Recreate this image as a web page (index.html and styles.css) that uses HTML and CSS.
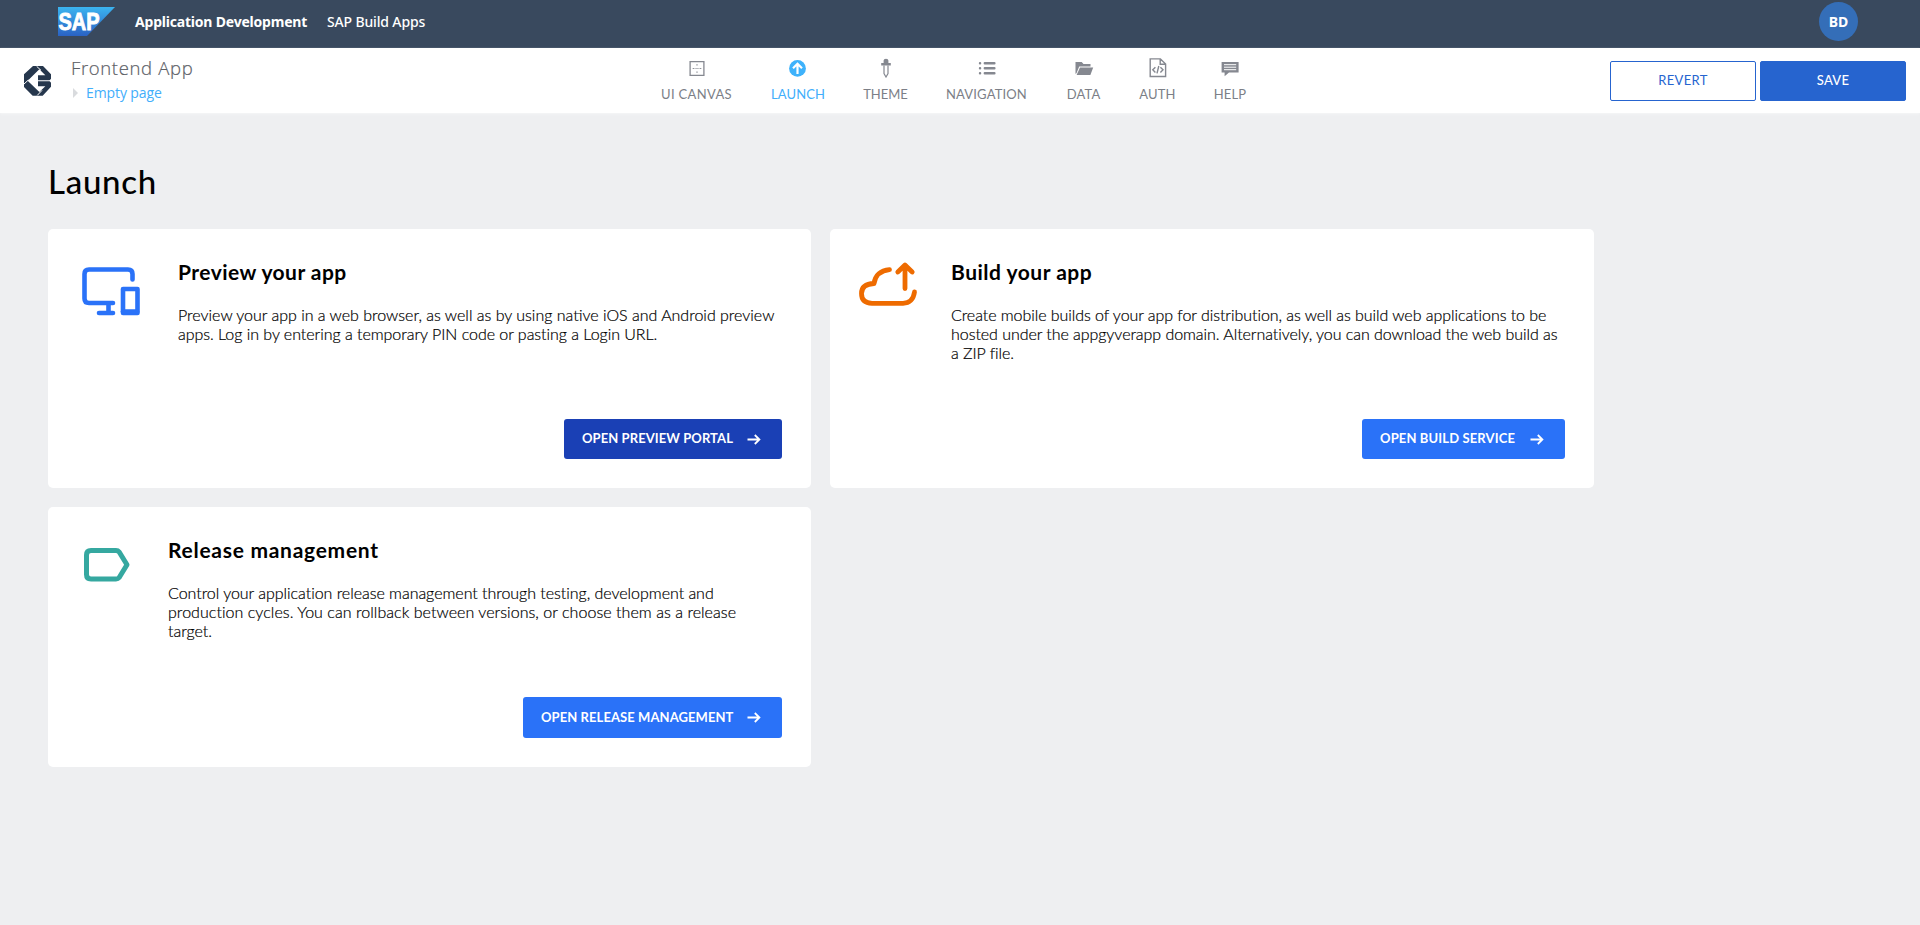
FILE: index.html
```html
<!DOCTYPE html>
<html lang="en">
<head>
<meta charset="utf-8">
<title>Launch</title>
<link rel="stylesheet" href="styles.css">
</head>
<body>
<header class="shell">
  <svg class="sap" width="57" height="29" viewBox="0 0 57 29">
    <defs><linearGradient id="g" x1="0" y1="0" x2="0" y2="1"><stop offset="0" stop-color="#3bb4f0"/><stop offset="1" stop-color="#2a62c4"/></linearGradient></defs>
    <path fill="url(#g)" d="M0 0h57L29 29H0z"/>
    <text class="sap-text" x="0.5" y="22.5" textLength="41" lengthAdjust="spacingAndGlyphs">SAP</text>
  </svg>
  <span class="product">Application Development</span>
  <span class="sub">SAP Build Apps</span>
  <span class="avatar">BD</span>
</header>
<div class="toolbar">
  <svg class="logo" width="27" height="30" viewBox="72 197 81 90">
    <path fill="#26374d" d="M99 197h30l24 25v13l-5 6 5 6v12l-25 27H98l-26-26v-38z"/>
    <path fill="#fff" d="M83 241l35-34 18 18h-22v15h36v3h-36v15h22l-18 17z"/>
    <path stroke="#fff" stroke-width="3" d="M72 251l13-12M110 198l13 12M112 285l14-15"/>
  </svg>
  <div class="names">
    <div class="app">Frontend App</div>
    <div class="page"><svg width="5" height="10" viewBox="0 0 5 10"><path fill="#d9dbde" d="M0 0l5 5-5 5z"/></svg>Empty page</div>
  </div>
  <nav class="nav">
    <a class="item w71"><svg width="20" height="20" viewBox="0 0 20 20"><path fill="none" stroke="#858890" stroke-width="1.3" d="M3.1 3.600h13.800v13.800H3.100z"/><path fill="#858890" d="M9.400 6.200h1.200v1.200H9.400zM9.400 9.900h1.200v1.200H9.400zM9.400 13.600h1.200v1.200H9.400zM5.700 9.900h1.200v1.200H5.700zM7.600 9.900h.9v1.200h-.9zM11.500 9.900h.9v1.200h-.9zM13.100 9.900h1.200v1.200h-1.200z"/></svg>UI CANVAS</a>
    <a class="item w54 on"><svg width="20" height="20" viewBox="0 0 20 20"><circle cx="9.500" cy="10.400" r="8.400" fill="#3eb2fb"/><path fill="none" stroke="#fff" stroke-width="2.200" d="M9.500 16V6.500M5 10.200l4.500-4.400 4.500 4.400"/></svg>LAUNCH</a>
    <a class="item w43"><svg width="20" height="20" viewBox="0 0 20 20"><path fill="#858890" d="M7.600 5V2.600Q7.600.8 10 .8t2.400 1.800V5h2.400v2.400H5.200V5z"/><path fill="none" stroke="#858890" stroke-width="1.200" d="M8 7.400v8.200l2 3.400 2-3.400V7.400"/></svg>THEME</a>
    <a class="item w81"><svg width="20" height="20" viewBox="0 0 20 20"><path fill="none" stroke="#858890" stroke-width="2.400" stroke-linecap="round" d="M7.800 5.200h9.600M7.800 10.200h9.600M7.800 15.200h9.600M3 5.200h.1M3 10.200h.1M3 15.200h.1"/></svg>NAVIGATION</a>
    <a class="item w35"><svg width="20" height="20" viewBox="0 0 20 20"><path fill="#858890" d="M1.500 16V4h6.200l1.800 2h7v2.600H5.200L2.600 15z"/><path fill="#858890" d="M6 9.600h13.200L16.400 17H2.600z"/></svg>DATA</a>
    <a class="item w35"><svg width="20" height="20" viewBox="0 0 20 20"><path fill="none" stroke="#858890" stroke-width="1.400" d="M12.400.9H2.200v17.600h15.400V6zM12.200 1v5.200h5.300M7.400 9.200l-2.600 2.600 2.600 2.600M12.400 9.200l2.600 2.600-2.600 2.600M10.800 8l-1.800 7.400"/></svg>AUTH</a>
    <a class="item w32"><svg width="20" height="20" viewBox="0 0 20 20"><path fill="#858890" d="M1.600 4h17v10.400H9L4.600 18.200v-3.800h-3z"/><path stroke="#fff" stroke-width="1" d="M4 6.700h12.200M4 9.200h12.200M4 11.700h12.200"/></svg>HELP</a>
  </nav>
  <div class="actions"><button class="act ghost">REVERT</button><button class="act solid">SAVE</button></div>
</div>
<main class="main">
  <h1 class="title">Launch</h1>
  <div class="cards">
    <section class="card c1">
      <svg class="ico" width="60" height="52" viewBox="0 0 60 52"><g fill="none" stroke="#2a72f8" stroke-width="4.600" stroke-linecap="round" stroke-linejoin="round"><path d="M50.500 14.500V9Q50.500 4.500 46 4.500H7Q2.500 4.500 2.500 9V33.500Q2.500 38 7 38H31M26.500 38v9M17 48H31"/><path d="M41 24h14.500v24H41z"/><path d="M41 46.500h14"/></g></svg>
      <div class="body"><h2>Preview your app</h2><p>Preview your app in a web browser, as well as by using native iOS and Android preview<br><span class="l2">apps. Log in by entering a temporary PIN code or pasting a Login URL.</span></p></div>
      <button class="cta dark">OPEN PREVIEW PORTAL<svg width="14" height="11" viewBox="0 0 14 11"><path d="M.5 5.500h12M7.800 1l4.600 4.500L7.800 10"/></svg></button>
    </section>
    <section class="card c2">
      <svg class="ico" width="60" height="50" viewBox="0 0 60 50"><g fill="none" stroke="#ee6b00" stroke-width="4.800" stroke-linecap="round" stroke-linejoin="round"><path d="M30.500 9.700Q17 11 15 23.500Q2.500 24 2.500 33.500T13 43.300H44Q54 43 55.500 32"/><path d="M46 28.500V5.500M38.800 12L46 5l7.200 7"/></g></svg>
      <div class="body"><h2>Build your app</h2><p>Create mobile builds of your app for distribution, as well as build web applications to be<br>hosted under the appgyverapp domain. Alternatively, you can download the web build as<br>a ZIP file.</p></div>
      <button class="cta">OPEN BUILD SERVICE<svg width="14" height="11" viewBox="0 0 14 11"><path d="M.5 5.500h12M7.800 1l4.600 4.500L7.800 10"/></svg></button>
    </section>
    <section class="card c3">
      <svg class="ico" width="46" height="36" viewBox="0 0 46 36"><path fill="none" stroke="#35a8a0" stroke-width="5" stroke-linejoin="round" d="M7 3.500H32Q34 3.500 35.200 5L43 17.700 35.200 30.500Q34 32 32 32H7Q2.500 32 2.500 27.500V8Q2.500 3.500 7 3.500z"/></svg>
      <div class="body"><h2>Release management</h2><p>Control your application release management through testing, development and<br><span class="l2">production cycles. You can rollback between versions, or choose them as a release</span><br>target.</p></div>
      <button class="cta">OPEN RELEASE MANAGEMENT<svg width="14" height="11" viewBox="0 0 14 11"><path d="M.5 5.500h12M7.800 1l4.600 4.500L7.800 10"/></svg></button>
    </section>
  </div>
</main>
</body>
</html>
```
FILE: styles.css
```css
* { box-sizing: border-box; }
body { margin: 0; height: 925px; overflow: hidden; background: #eeeff1; font-family: Lato, "Open Sans", sans-serif; color: #000; white-space: nowrap; }
.shell { height: 48px; background: #39495e; display: flex; align-items: center; padding: 0 62px 5px 58px; color: #fff; font: 14px "Noto Sans", sans-serif; }
.sap-text { font: bold 24px "Liberation Sans", sans-serif; fill: #fff; stroke: #fff; stroke-width: 0.9px; }
.product { margin-left: 20px; width: 172px; font-weight: 700; letter-spacing: -0.2px; padding-bottom: 1px; }
.sub { margin-left: 20px; font-weight: 500; letter-spacing: -0.15px; padding-bottom: 1px; }
.avatar { margin-left: auto; width: 39px; height: 39px; border-radius: 50%; background: #346eb8; font-weight: 700; font-size: 14px; display: flex; align-items: center; justify-content: center; padding-bottom: 1px; }
.toolbar { height: 65px; background: #fff; display: flex; align-items: flex-start; box-shadow: 0 1px 2px #f5f6f7; padding: 0 14px 0 24px; position: relative; }
.logo { margin-top: 18px; }
.names { margin-left: 20px; width: 590px; font-family: "Open Sans", sans-serif; }
.app { font-size: 18.5px; line-height: 24px; margin-top: 8px; color: #5c6066; font-weight: 300; letter-spacing: 0.65px; -webkit-text-stroke: 0.2px #5c6066; }
.page { display: flex; align-items: center; gap: 8px; padding-left: 2px; font-size: 14px; line-height: 20px; margin-top: 3px; color: #42aefb; letter-spacing: -0.1px; }
.nav { display: flex; gap: 39px; }
.item { display: flex; flex-direction: column; align-items: center; color: #7c7f87; font-size: 13px; line-height: 16px; letter-spacing: 0.15px; }
.item svg { margin: 10px 0 8px; }
.on { color: #42aefb; }
.w71 { width: 71px; letter-spacing: 0.35px; }
.w54 { width: 54px; }
.w43 { width: 43px; letter-spacing: 0; }
.w81 { width: 81px; }
.w35 { width: 35px; }
.w32 { width: 32px; }
.actions { margin-left: auto; display: flex; gap: 4px; padding-top: 13px; }
.act { width: 146px; height: 40px; border: 1px solid #2664cf; border-radius: 2px; font: 13px Lato, sans-serif; padding: 0 0 2px; letter-spacing: 0.3px; }
.ghost { background: #fff; color: #2664cf; }
.solid { background: #2664cf; color: #fff; font-weight: 500; }
.main { padding: 48px 0 0 48px; }
.title { margin: 0 0 28px; font-size: 33px; line-height: 40px; font-weight: 500; letter-spacing: 0.7px; }
.cards { display: grid; grid-template-columns: 763px 764px; grid-template-rows: 259px 260px; gap: 19px; }
.card { background: #fff; border-radius: 5px; position: relative; display: flex; align-items: flex-start; }
.body h2 { margin: 29px 0 0; font-size: 21px; line-height: 28px; font-weight: 700; letter-spacing: 0.45px; }
.body p { margin: 19px 0 0; font-size: 16px; line-height: 19.2px; font-weight: 300; -webkit-text-stroke: 0.2px #000; }
.cta { position: absolute; right: 29px; bottom: 29px; height: 40px; border: 0; border-radius: 3px; background: #2a72f8; color: #fff; padding: 0 21px 2px 18px; display: flex; align-items: center; justify-content: space-between; width: 218px; font: 700 13px Lato, sans-serif; letter-spacing: 0.08px; }
.cta svg { fill: none; stroke: #fff; stroke-width: 1.8; margin-top: 2px; }
.dark { background: #1a40b5; }
.ico { flex: none; }
.c1 .ico { margin: 36px 36px 0 34px; }
.c1 .l2 { letter-spacing: -0.03px; }
.c2 .ico { margin: 31px 32px 0 29px; }
.c2 h2 { letter-spacing: 0.5px; }
.c2 p { letter-spacing: -0.05px; }
.c2 .cta { width: 203px; letter-spacing: 0.13px; }
.c3 .ico { margin: 40px 38px 0 36px; }
.c3 h2 { letter-spacing: 0.72px; }
.c3 p { letter-spacing: -0.03px; }
.c3 .l2 { letter-spacing: 0.05px; }
.c3 .cta { width: 259px; height: 41px; }
```
